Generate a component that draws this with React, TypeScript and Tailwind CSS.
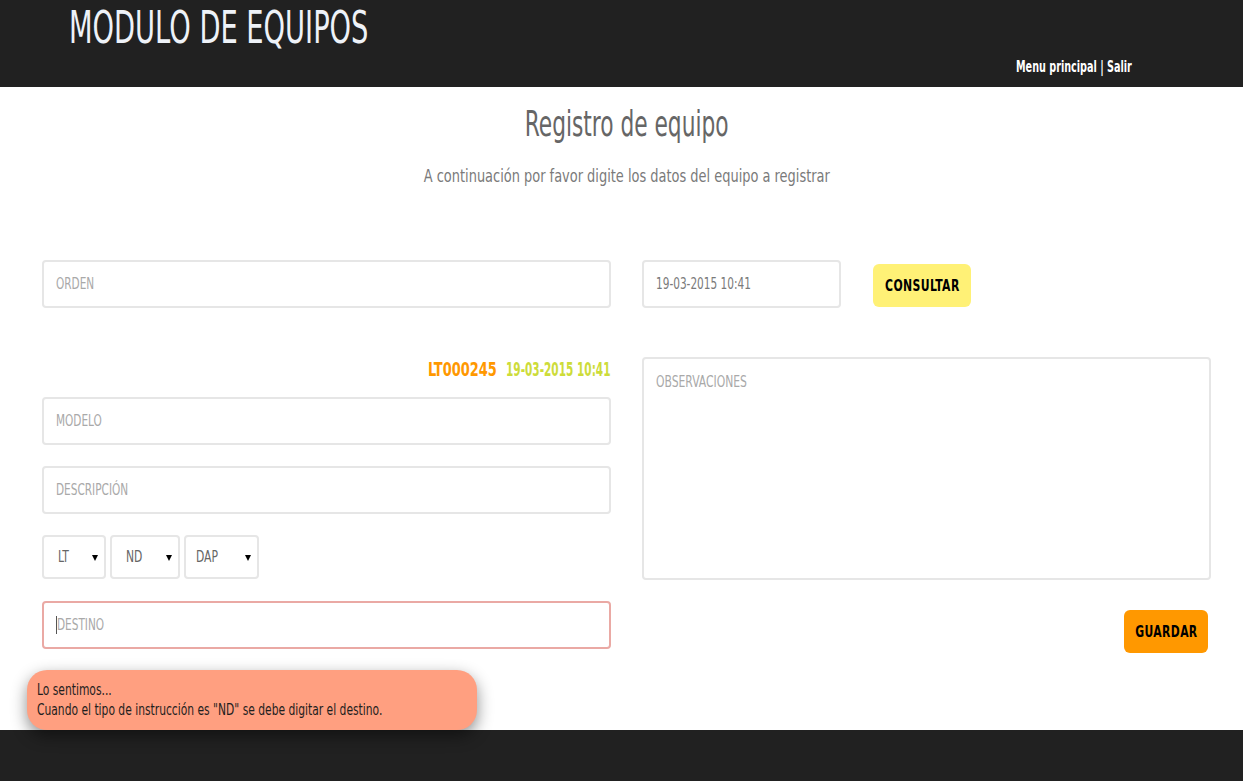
import React from "react";

const font = { fontFamily: '"DejaVu Sans Condensed", "DejaVu Sans", sans-serif', fontStretch: "condensed" as const };

function Field({ placeholder, className = "", textClass = "text-[#a9a9a9]" }: { placeholder: string; className?: string; textClass?: string }) {
  return (
    <div className={`h-[48px] border-2 border-[#e6e6e6] rounded-[4px] flex items-center pl-[12px] text-[15px] ${textClass} ${className}`}>
      <span className="inline-block whitespace-nowrap origin-left scale-x-[0.78]">{placeholder}</span>
    </div>
  );
}

function Select({ label, w, pl }: { label: string; w: string; pl: string }) {
  return (
    <div className={`h-[44px] ${w} ${pl} border-2 border-[#e6e6e6] rounded-[4px] flex items-center justify-between pr-[6px] text-[15px] text-[#666]`}>
      <span className="inline-block whitespace-nowrap origin-left scale-x-[0.8]">{label}</span>
      <span className="w-0 h-0 border-l-[3px] border-r-[3px] border-t-[6px] border-l-transparent border-r-transparent border-t-black mt-[2px]" />
    </div>
  );
}

export default function App() {
  return (
    <div className="w-[1243px] h-[781px] bg-white flex flex-col relative overflow-hidden" style={font}>
      <header className="h-[87px] bg-[#212121] shrink-0 flex flex-col">
        <div className="pl-[69px] pt-[2px] text-[44px] leading-[52px] text-[#eef2f8]">
          <span className="inline-block whitespace-nowrap origin-left scale-x-[0.69]">MODULO DE EQUIPOS</span>
        </div>
        <div className="flex justify-end pr-[111px] mt-[3px]">
          <div className="w-[116px] text-[16px] leading-[20px] font-bold text-white">
            <span className="inline-block whitespace-nowrap origin-left scale-x-[0.67]">Menu principal | Salir</span>
          </div>
        </div>
      </header>
      <main className="flex-1 flex flex-col">
        <div className="pl-[11px] mt-[17px] text-center text-[35px] leading-[40px] text-[#666]">
          <span className="inline-block whitespace-nowrap scale-x-[0.69]">Registro de equipo</span>
        </div>
        <div className="pl-[11px] mt-[21px] text-center text-[18px] leading-[22px] text-[#7a7a7a]">
          <span className="inline-block whitespace-nowrap scale-x-[0.8]">A continuación por favor digite los datos del equipo a registrar</span>
        </div>
        <div className="flex gap-[31px] pl-[42px] pr-[32px] mt-[73px]">
          <div className="w-[569px] flex flex-col">
            <Field placeholder="ORDEN" />
            <div className="flex justify-end gap-[10px] mt-[49px] h-[24px] leading-[24px] text-[20px] font-bold">
              <div className="w-[68px] text-[#ff9800]">
                <span className="inline-block whitespace-nowrap origin-left scale-x-[0.72]">LT000245</span>
              </div>
              <div className="w-[105px] text-[#cddc39]">
                <span className="inline-block whitespace-nowrap origin-left scale-x-[0.585]">19-03-2015 10:41</span>
              </div>
            </div>
            <Field placeholder="MODELO" className="mt-[16px]" />
            <Field placeholder="DESCRIPCIÓN" className="mt-[21px]" />
            <div className="flex gap-[4px] mt-[21px]">
              <Select label="LT" w="w-[64px]" pl="pl-[14px]" />
              <Select label="ND" w="w-[70px]" pl="pl-[14px]" />
              <Select label="DAP" w="w-[75px]" pl="pl-[10px]" />
            </div>
            <div className="h-[48px] mt-[22px] border-2 border-[#eaa9a4] rounded-[4px] flex items-center pl-[12px] text-[15px] text-[#a9a9a9]">
              <span className="w-px h-[18px] bg-[#555]" />
              <span className="inline-block whitespace-nowrap origin-left scale-x-[0.78]">DESTINO</span>
            </div>
          </div>
          <div className="w-[569px] flex flex-col">
            <div className="flex items-start gap-[32px]">
              <Field placeholder="19-03-2015 10:41" className="w-[199px]" textClass="text-[#7a7a7a]" />
              <div className="h-[43px] w-[98px] mt-[4px] rounded-[6px] bg-[#fff176] flex items-center justify-center text-[16px] font-bold text-black tracking-[0.5px]">
                <span className="inline-block whitespace-nowrap scale-x-[0.755]">CONSULTAR</span>
              </div>
            </div>
            <div className="mt-[49px] h-[223px] border-2 border-[#e6e6e6] rounded-[4px] pl-[12px] pt-[13px] text-[15px] leading-[20px] text-[#a9a9a9]">
              <span className="inline-block whitespace-nowrap origin-left scale-x-[0.8]">OBSERVACIONES</span>
            </div>
            <div className="flex justify-end mt-[30px] pr-[3px]">
              <div className="h-[43px] w-[84px] rounded-[6px] bg-[#ff9800] flex items-center justify-center text-[16px] font-bold text-black tracking-[0.5px]">
                <span className="inline-block whitespace-nowrap scale-x-[0.75]">GUARDAR</span>
              </div>
            </div>
          </div>
        </div>
      </main>
      <footer className="h-[51px] bg-[#212121] shrink-0" />
      <div className="absolute left-[27px] top-[670px] w-[450px] h-[60px] rounded-[20px] bg-[#ff9f80] shadow-[0_6px_16px_rgba(0,0,0,0.45)] pl-[10px] pt-[10px] text-[16px] leading-[20px] text-[#1e1e1e]">
        <div className="whitespace-nowrap origin-left scale-x-[0.745]">Lo sentimos...</div>
        <div className="whitespace-nowrap origin-left scale-x-[0.745]">Cuando el tipo de instrucción es "ND" se debe digitar el destino.</div>
      </div>
    </div>
  );
}
